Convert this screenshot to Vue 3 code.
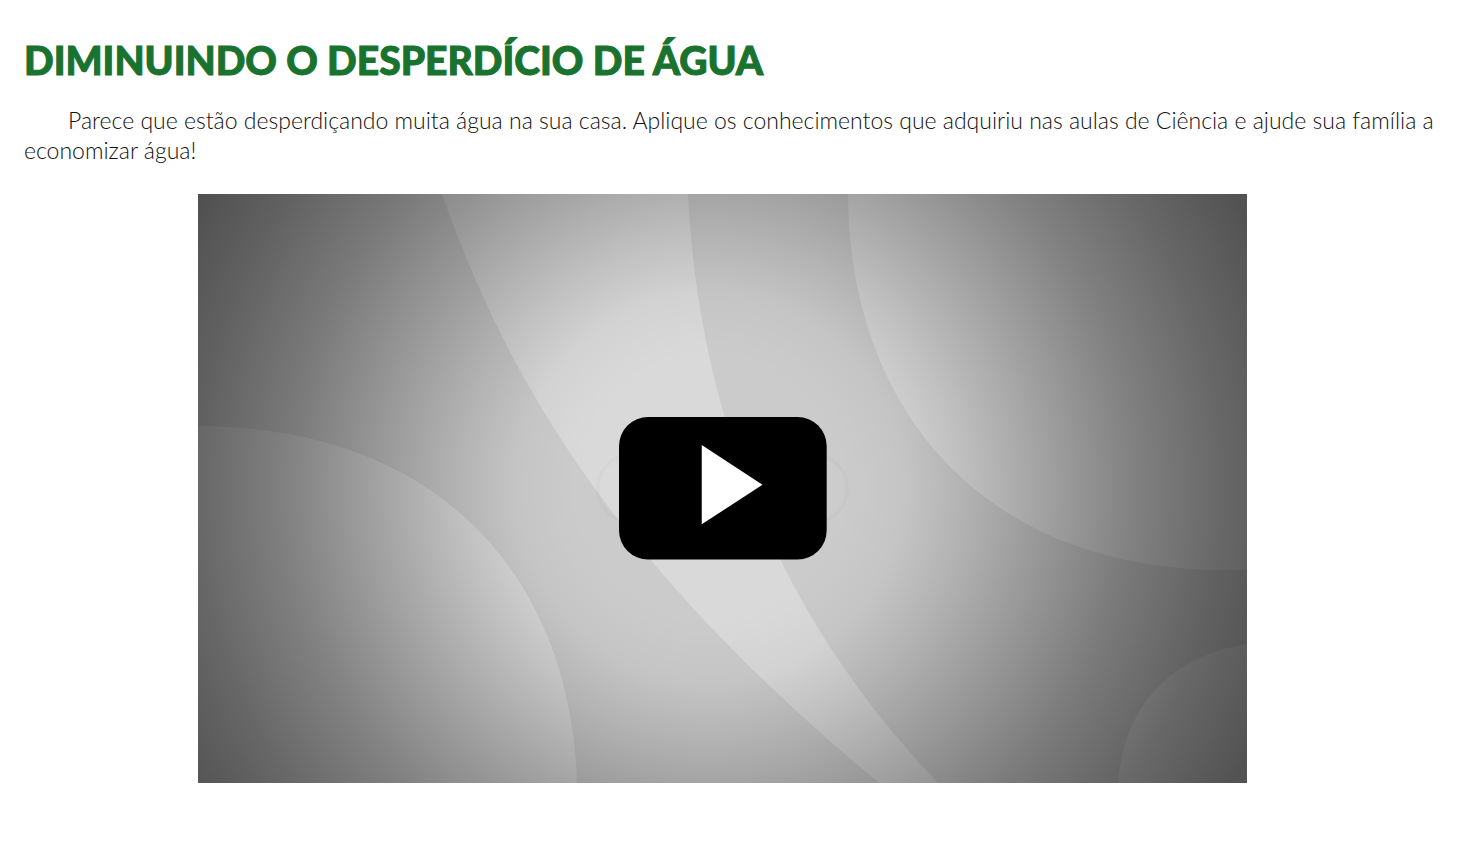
<script setup>
const title = 'DIMINUINDO O DESPERDÍCIO DE ÁGUA'
const intro =
  'Parece que estão desperdiçando muita água na sua casa. Aplique os conhecimentos que adquiriu nas aulas de Ciência e ajude sua família a economizar água!'
</script>

<template>
  <main class="page">
    <h1 class="title">{{ title }}</h1>
    <p class="intro">{{ intro }}</p>
    <figure class="video">
      <svg class="cover" viewBox="0 0 1049 589" preserveAspectRatio="none" aria-hidden="true">
        <defs>
          <radialGradient id="vignette" gradientUnits="userSpaceOnUse" cx="512" cy="294" r="600">
            <stop offset="0.22" stop-color="#000" stop-opacity="0" />
            <stop offset="0.32" stop-color="#000" stop-opacity="0.03" />
            <stop offset="0.42" stop-color="#000" stop-opacity="0.12" />
            <stop offset="0.55" stop-color="#000" stop-opacity="0.25" />
            <stop offset="0.7" stop-color="#000" stop-opacity="0.4" />
            <stop offset="0.85" stop-color="#000" stop-opacity="0.52" />
            <stop offset="1" stop-color="#000" stop-opacity="0.62" />
          </radialGradient>
        </defs>
        <rect width="1049" height="589" fill="#cbcbcb" />
        <g fill="#d9d9d9">
          <path d="M244 0C311 191 421 373 681 589H740C607 450 503 260 490 0Z" />
          <path d="M650 0C651 211 780 376 1030 376H1049V0Z" />
          <path d="M0 232C235 233 372 376 379 589H0Z" />
          <path d="M920 589C926 512 972 462 1049 450V589Z" />
        </g>
        <rect x="400" y="261" width="249" height="67" rx="33" fill="#fff" fill-opacity="0.03" stroke="#000" stroke-opacity="0.015" stroke-width="4" />
        <rect width="1049" height="589" fill="url(#vignette)" />
      </svg>
      <button class="play" type="button" aria-label="Reproduzir vídeo">
        <svg viewBox="0 0 207 142" aria-hidden="true">
          <rect width="207" height="142" rx="29" fill="#000" />
          <path d="M82.500 28L143 67.500L82.500 107Z" fill="#fff" />
        </svg>
      </button>
    </figure>
  </main>
</template>

<style>
body {
  margin: 0;
  background: #fff;
}
</style>

<style scoped>
.page {
  padding: 35px 24px 64px;
}

.title {
  margin: 0;
  font-family: Lato, "Open Sans", sans-serif;
  font-size: 39px;
  line-height: 50px;
  font-weight: 900;
  color: #19722e;
  -webkit-text-stroke: 1px #19722e;
}

.intro {
  margin: 20px 0 29px;
  font-family: Lato, "Open Sans", sans-serif;
  font-size: 23px;
  line-height: 30px;
  font-weight: 300;
  text-indent: 44px;
  color: #111;
}

.video {
  position: relative;
  margin: 0 189px 0 174px;
}

.cover {
  display: block;
  width: 100%;
  aspect-ratio: 1049 / 589;
}

.play {
  position: absolute;
  top: 37.900%;
  left: 40.100%;
  width: 19.800%;
  padding: 0;
  border: 0;
  background: none;
  cursor: pointer;
}

.play svg {
  display: block;
  width: 100%;
  overflow: visible;
}
</style>
